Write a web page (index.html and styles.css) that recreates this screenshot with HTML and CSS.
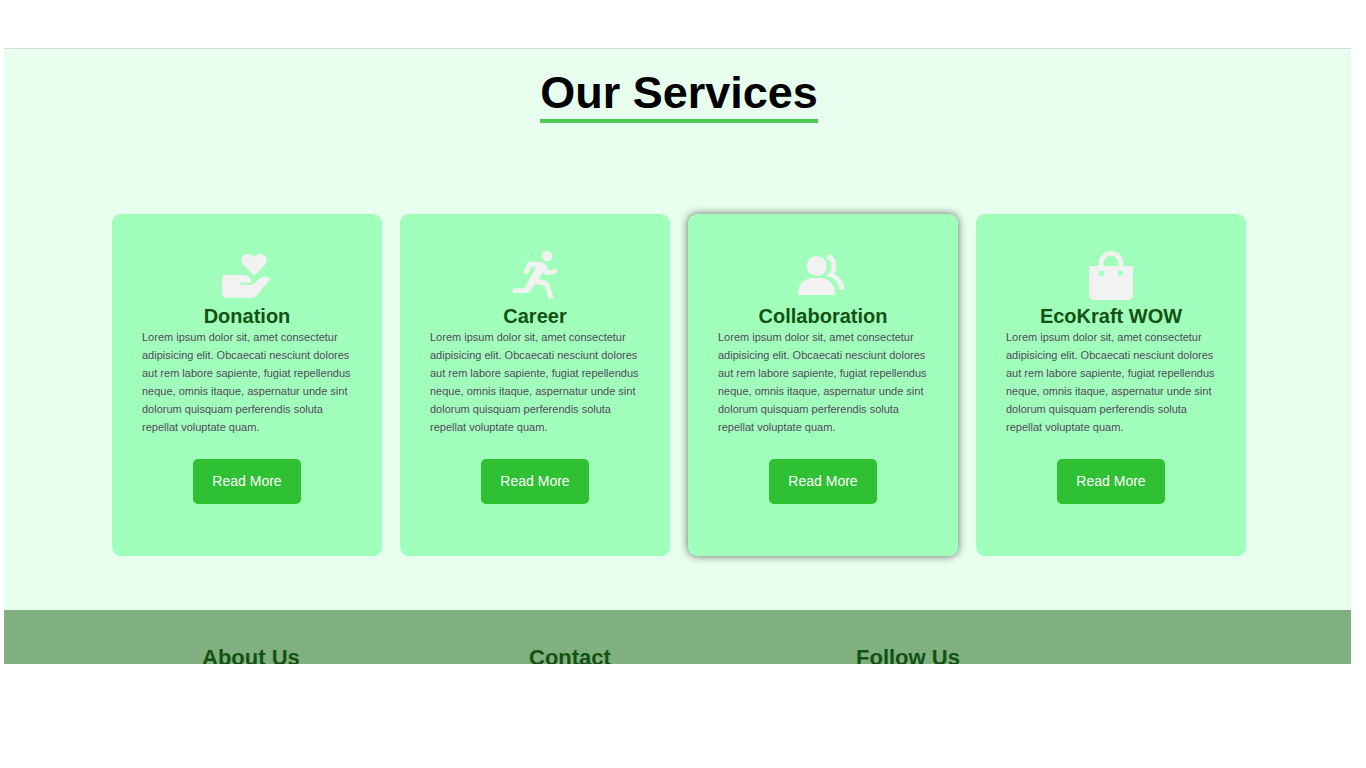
FILE: index.html
```html
<!DOCTYPE html>
<html lang="en">
<head>
<meta charset="utf-8">
<meta name="viewport" content="width=device-width, initial-scale=1">
<title>Our Services</title>
<link rel="stylesheet" href="styles.css">
</head>
<body>
<main class="services">
  <h1 class="services-title">Our Services</h1>
  <div class="cards">
    <article class="card">
      <svg class="card-icon" viewBox="0 0 54 54" aria-hidden="true">
        <path d="M34.2 27.7 23.7 17C20.8 14 21.2 9.5 24 7.4c3-2.3 7.4-1.8 10.2 1.6 2.8-3.4 7.200-3.900 10.200-1.600 2.800 2.100 3.200 6.600.3 9.600z"/>
        <path d="M5 27h19.500c3.500 0 5.500 2.500 6.700 5.800.3 1 .3 1.900.3 1.900H20v2h12.500l8-6.700c1.500-1.200 2.800-1.500 4.500-1.200l6 1.400-14.300 17.300c-1.200 1.500-2.500 2.200-4.500 2.200H6.500C4 49.700 2 47.700 2 45.200V30c0-1.700 1.300-3 3-3z"/>
      </svg>
      <h2 class="card-title">Donation</h2>
      <p class="card-text">Lorem ipsum dolor sit, amet consectetur adipisicing elit. Obcaecati nesciunt dolores aut rem labore sapiente, fugiat repellendus neque, omnis itaque, aspernatur unde sint dolorum quisquam perferendis soluta repellat voluptate quam.</p>
      <button class="card-button" type="button">Read More</button>
    </article>
    <article class="card">
      <svg class="card-icon" viewBox="0 0 54 54" aria-hidden="true">
        <circle cx="39" cy="8" r="5.200"/>
        <path d="M15.300 24.700 19 16.200c.9-2.200 2-2.900 4.300-2.700l8.700.6c3.700.3 5.800 2 7.200 5l1.600 3.300 7.600-1.800 1.100 4.500-8.300 2c-2.600.6-4-.1-5.400-2l-.8-1-4.600 7 5.600 1.200c3.100.7 4.600 2.400 5.500 5.300l3.900 12-4.700 1.400-3.400-11.400c-.4-1.300-1-1.700-2.200-2l-7.800-1.800-4.300 6.300c-1.600 2.300-3 2.900-5.700 2.900H4.700v-4.600h10.600c1 0 1.400-.3 1.900-1.100l10.500-19.900-4.600-.5-3.400 7.700z"/>
      </svg>
      <h2 class="card-title">Career</h2>
      <p class="card-text">Lorem ipsum dolor sit, amet consectetur adipisicing elit. Obcaecati nesciunt dolores aut rem labore sapiente, fugiat repellendus neque, omnis itaque, aspernatur unde sint dolorum quisquam perferendis soluta repellat voluptate quam.</p>
      <button class="card-button" type="button">Read More</button>
    </article>
    <article class="card card-active">
      <svg class="card-icon" viewBox="0 0 54 54" aria-hidden="true">
        <circle cx="20.700" cy="18" r="10.100"/>
        <path d="M2 47v-2.500C2 36.500 8.500 30 16.500 30h8C32.500 30 39 36.500 39 44.500V47z"/>
        <path d="M33 6c5 2.500 7.200 6.700 7.200 11.700 0 3.400-.8 6.200-2 8.500 6.300 2.500 10.100 8 10.500 15.900h-5c-.4-7.600-5.600-13.400-14.200-14.200 4.700-2.900 6-6.400 6-9.900 0-3.200-1.600-6-5-7.500z"/>
      </svg>
      <h2 class="card-title">Collaboration</h2>
      <p class="card-text">Lorem ipsum dolor sit, amet consectetur adipisicing elit. Obcaecati nesciunt dolores aut rem labore sapiente, fugiat repellendus neque, omnis itaque, aspernatur unde sint dolorum quisquam perferendis soluta repellat voluptate quam.</p>
      <button class="card-button" type="button">Read More</button>
    </article>
    <article class="card">
      <svg class="card-icon" viewBox="0 0 54 54" aria-hidden="true">
        <path fill-rule="evenodd" d="M6 18h8.700v-2.700a12.300 12.300 0 0 1 24.600 0V18H48a1 1 0 0 1 1 1v28.500a4.500 4.500 0 0 1-4.500 4.500h-35A4.500 4.500 0 0 1 5 47.500V19a1 1 0 0 1 1-1zm13.500 0h15v-2.700a7.500 7.500 0 0 0-15 0zM15 23v4.500h4.700V23zm19.300 0v4.500H39V23z"/>
      </svg>
      <h2 class="card-title">EcoKraft WOW</h2>
      <p class="card-text">Lorem ipsum dolor sit, amet consectetur adipisicing elit. Obcaecati nesciunt dolores aut rem labore sapiente, fugiat repellendus neque, omnis itaque, aspernatur unde sint dolorum quisquam perferendis soluta repellat voluptate quam.</p>
      <button class="card-button" type="button">Read More</button>
    </article>
  </div>
</main>
<footer class="footer">
  <h2 class="footer-title">About Us</h2>
  <h2 class="footer-title">Contact</h2>
  <h2 class="footer-title">Follow Us</h2>
</footer>
</body>
</html>
```
FILE: styles.css
```css
* {
  box-sizing: border-box;
  margin: 0;
  padding: 0;
}

body {
  padding: 48px 15px 0 4px;
  background: #fff;
  font-family: "Liberation Sans", Arial, sans-serif;
}

.services {
  display: flex;
  flex-direction: column;
  align-items: center;
  padding: 18px 105px 54px 108px;
  border-top: 1px solid #d8dcda;
  background: #e8ffef;
}

.services-title {
  border-bottom: 4px solid #4fcb53;
  font-size: 45px;
  line-height: 52px;
  color: #000;
}

.cards {
  display: grid;
  grid-template-columns: repeat(4, 1fr);
  gap: 18px;
  width: 100%;
  margin-top: 91px;
}

.card {
  display: flex;
  flex-direction: column;
  align-items: center;
  padding: 34px 30px 52px;
  border-radius: 9px;
  background: #a0ffba;
}

.card-active {
  box-shadow: 0 0 9px rgba(0, 0, 0, 0.6);
}

.card-icon {
  width: 54px;
  height: 54px;
  fill: #f2f2f2;
}

.card-title {
  margin-top: 2px;
  font-size: 20px;
  line-height: 24px;
  color: #145214;
}

.card-text {
  font-size: 11px;
  line-height: 18px;
  color: #544860;
}

.card-button {
  margin-top: 23px;
  padding: 14px 18px;
  min-width: 108px;
  border: 0;
  border-radius: 5px;
  background: #2dc133;
  font-family: inherit;
  font-size: 14px;
  line-height: 17px;
  color: #fff;
}

.footer {
  display: grid;
  grid-template-columns: repeat(3, 1fr);
  height: 54px;
  padding: 35px 168px 0 198px;
  overflow: hidden;
  background: #80b080;
}

.footer-title {
  font-size: 22px;
  line-height: 26px;
  color: #145214;
}
```
